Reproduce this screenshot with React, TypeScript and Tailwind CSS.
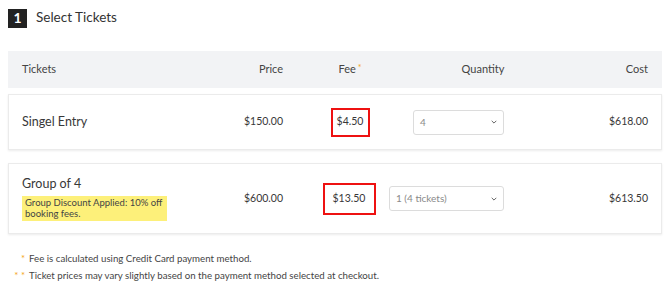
import React from "react";

const Chevron = () => (
  <svg width="6" height="4" viewBox="0 0 6 4" fill="none" className="shrink-0">
    <path d="M0.7 0.8 L3 3.1 L5.3 0.8" stroke="#666" strokeWidth="1" />
  </svg>
);

const Select = ({ label, w }: { label: string; w: string }) => (
  <div className={`${w} h-[25px] border border-[#dcdcdc] rounded-[3px] bg-white flex items-center justify-between pl-[6px] pr-[6px] text-[10px] text-[#8a8a8a]`}>
    <span>{label}</span>
    <Chevron />
  </div>
);

export default function App() {
  return (
    <div className="w-[670px] h-[288px] bg-white text-[#383838] px-[8px] pt-[8px]" style={{ fontFamily: "Lato, 'Open Sans', sans-serif" }}>
      <div className="flex items-center h-[20px]">
        <div className="w-[19px] h-[19px] bg-[#222] text-white font-bold text-[14px] flex items-center justify-center leading-none">1</div>
        <div className="ml-[9px] text-[13.5px] leading-none text-[#333]">Select Tickets</div>
      </div>

      <div className="mt-[23px] h-[37px] bg-[#f2f3f5] flex items-center px-[14px] text-[11px] text-[#444]">
        <div className="w-[181px]">Tickets</div>
        <div className="w-[80px] text-right">Price</div>
        <div className="w-[106px] pl-[28px] flex justify-center">
          <span>Fee</span>
          <span className="text-[#f5a623] ml-[2px] text-[9px]">*</span>
        </div>
        <div className="w-[188px] text-center">Quantity</div>
        <div className="flex-1 text-right">Cost</div>
      </div>

      <div className="mt-[6px] h-[56px] border border-[#ebebeb] shadow-[0_1px_2px_rgba(0,0,0,0.08)] flex items-center px-[13px]">
        <div className="w-[181px] text-[12.5px]">Singel Entry</div>
        <div className="w-[80px] text-right text-[10.5px]">$150.00</div>
        <div className="w-[106px] pl-[28px] flex justify-center">
          <div className="w-[39px] h-[29px] border-2 border-[#ee1111] flex items-center justify-center text-[10.5px]">$4.50</div>
        </div>
        <div className="w-[115px] flex justify-end">
          <Select label="4" w="w-[91px]" />
        </div>
        <div className="flex-1 text-right text-[10.5px]">$618.00</div>
      </div>

      <div className="mt-[13px] h-[71px] border border-[#ebebeb] shadow-[0_1px_2px_rgba(0,0,0,0.08)] flex items-center px-[13px]">
        <div className="w-[181px] flex flex-col items-start">
          <div className="text-[12.5px] leading-[16px]">Group of 4</div>
          <div className="mt-[4px] w-[145px] bg-[#fdf07a] px-[3px] py-[2px] text-[9.5px] leading-[10.5px] text-[#444]">
            Group Discount Applied: 10% off booking fees.
          </div>
        </div>
        <div className="w-[80px] text-right text-[10.5px]">$600.00</div>
        <div className="w-[106px] pl-[26px] flex justify-center">
          <div className="w-[53px] h-[32px] border-2 border-[#ee1111] flex items-center justify-center text-[10.5px]">$13.50</div>
        </div>
        <div className="w-[115px] flex justify-end">
          <Select label="1 (4 tickets)" w="w-[115px]" />
        </div>
        <div className="flex-1 text-right text-[10.5px]">$613.50</div>
      </div>

      <div className="mt-[16px] text-[9.7px] text-[#444] leading-[17px]">
        <div className="flex">
          <span className="w-[21px] text-right pr-[4px] text-[#f5a623]">*</span>
          <span>Fee is calculated using Credit Card payment method.</span>
        </div>
        <div className="flex">
          <span className="w-[21px] text-right pr-[4px] text-[#f5a623]">* *</span>
          <span>Ticket prices may vary slightly based on the payment method selected at checkout.</span>
        </div>
      </div>
    </div>
  );
}
